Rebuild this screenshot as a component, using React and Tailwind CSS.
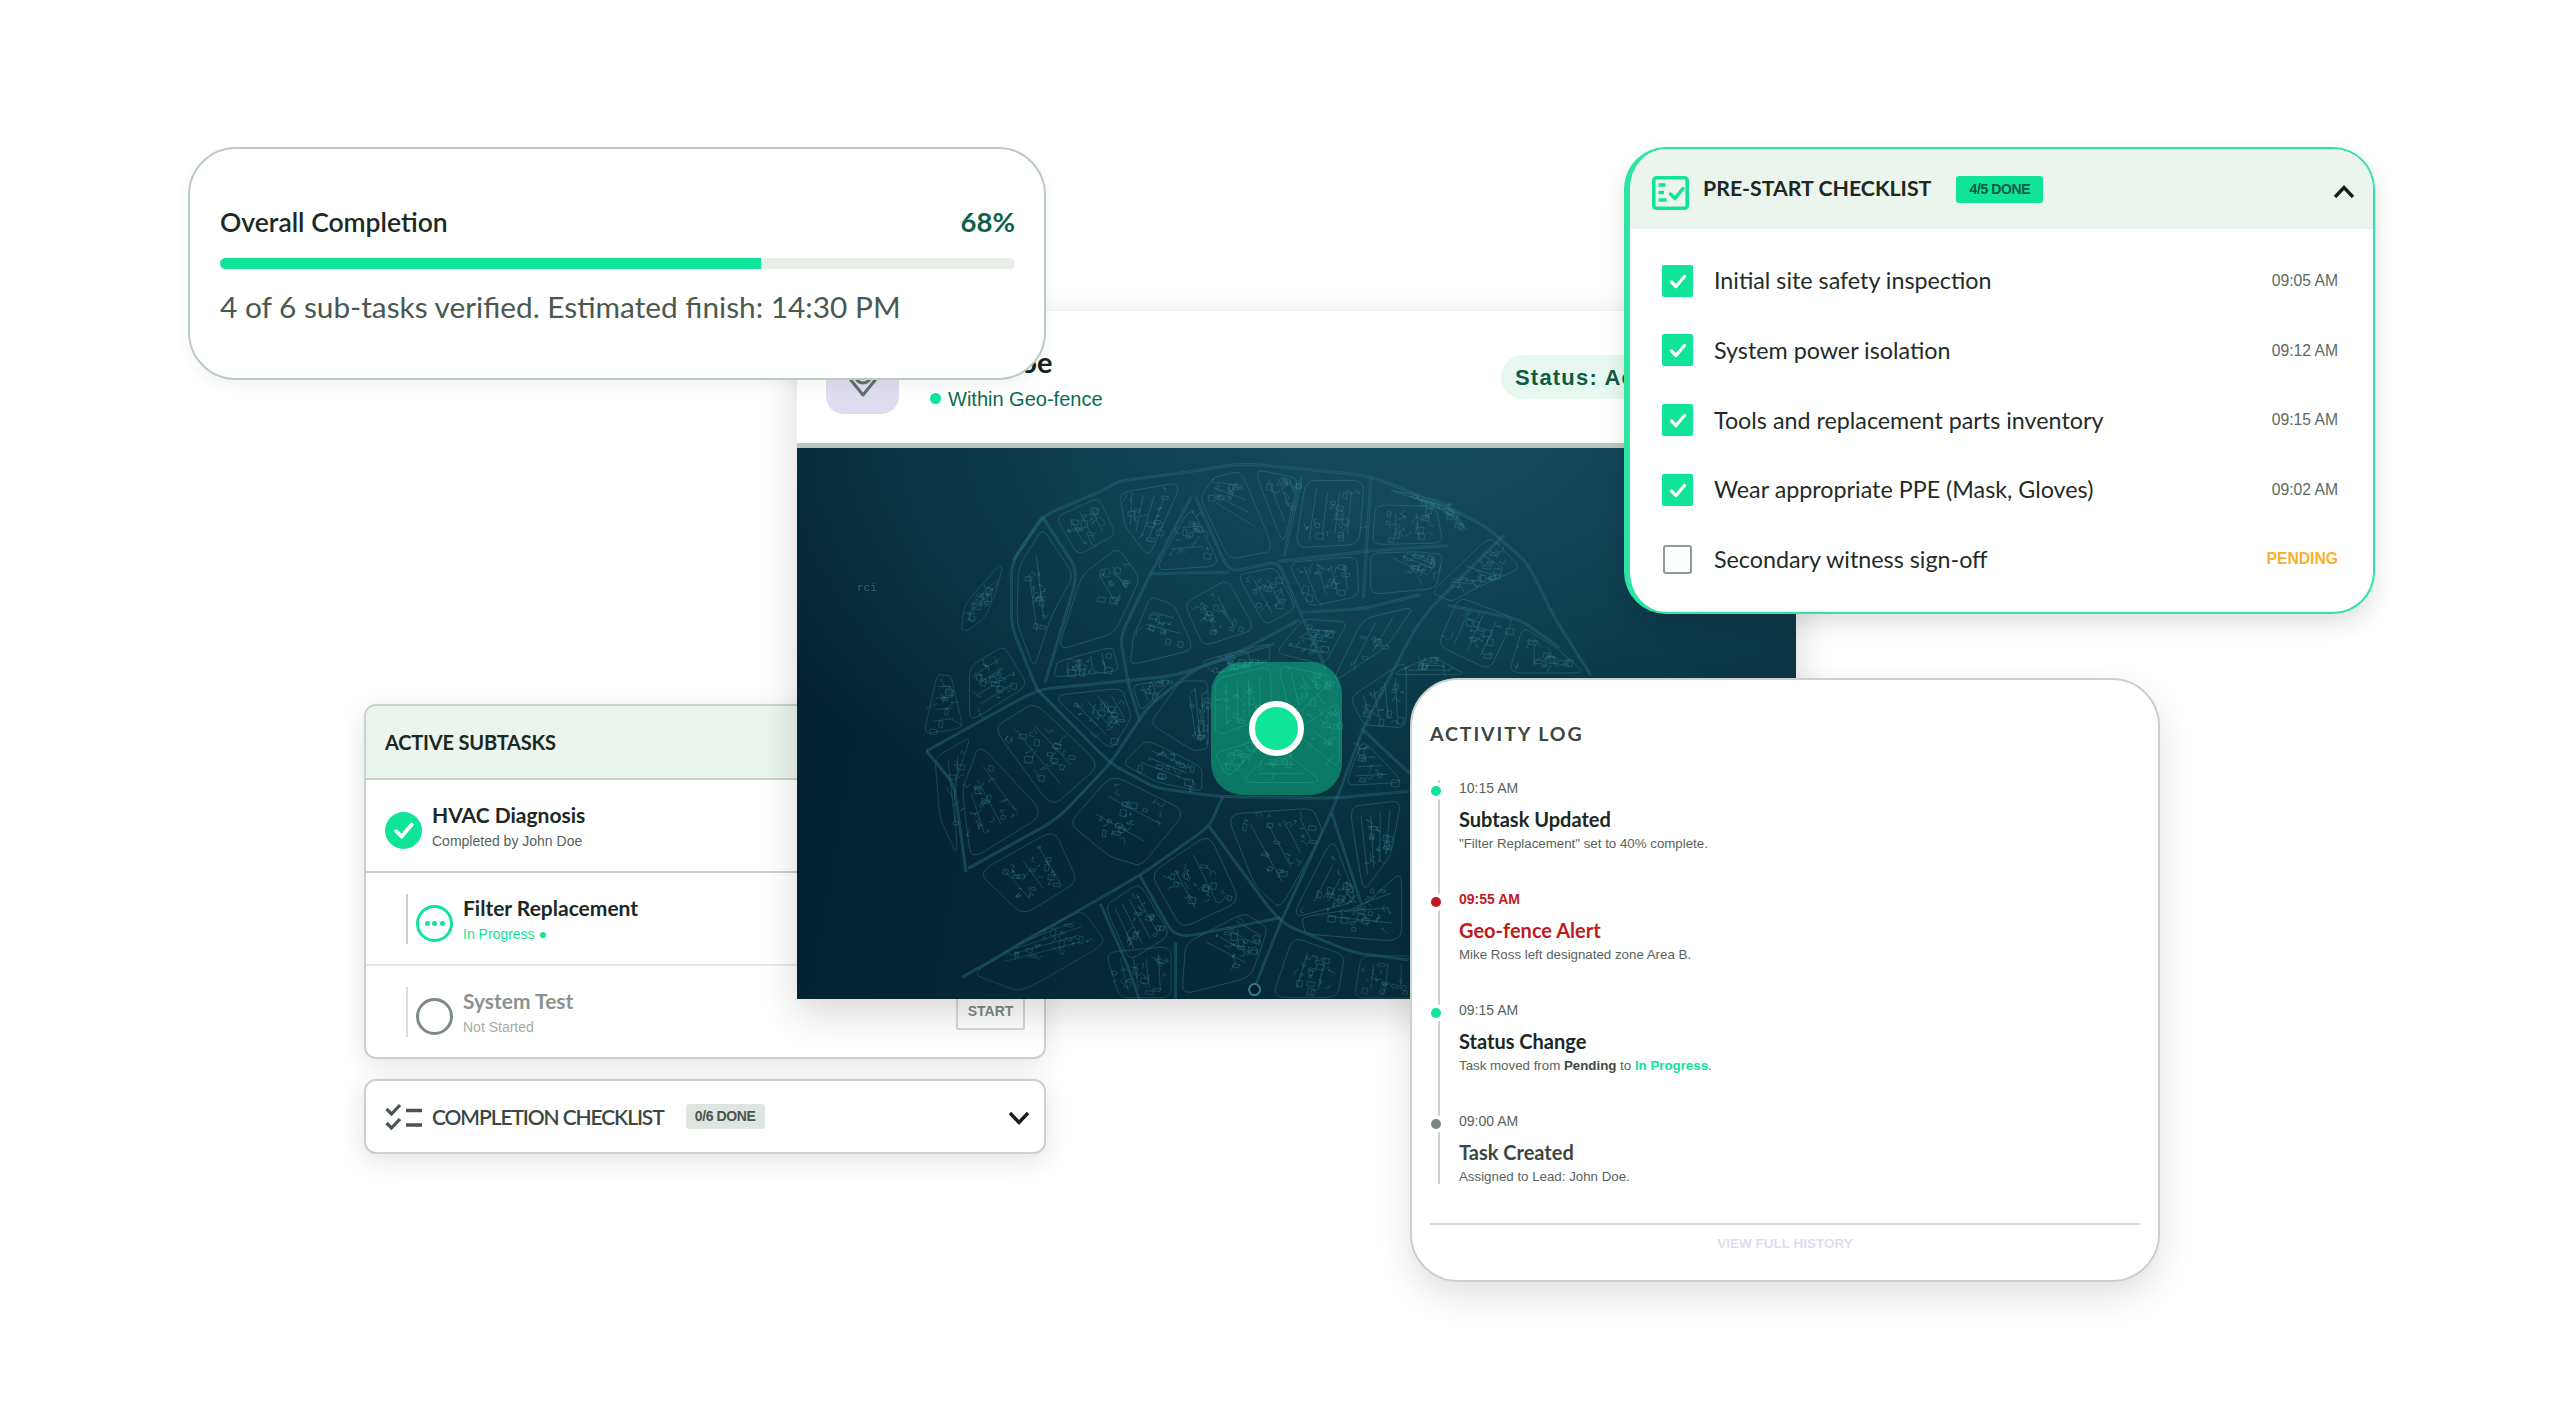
import React from "react";

const SX = 2.53, SY = 2.85;
const P = ([x, y]) => [3 + x / SX, 3 + y / SY];
const f = (n) => n.toFixed(1);
const pathOf = (pts, close) => "M" + pts.map((p) => f(p[0]) + " " + f(p[1])).join("L") + (close ? "Z" : "");
const lerp = (a, b, t) => [a[0] + (b[0] - a[0]) * t, a[1] + (b[1] - a[1]) * t];
const roundPoly = (pts, r = 0.18) => {
  const n = pts.length;
  let d = "";
  for (let i = 0; i < n; i++) {
    const p = pts[i], prev = pts[(i + n - 1) % n], next = pts[(i + 1) % n];
    const a = lerp(p, prev, r), b = lerp(p, next, r);
    d += (i === 0 ? "M" : "L") + f(a[0]) + " " + f(a[1]) + "Q" + f(p[0]) + " " + f(p[1]) + " " + f(b[0]) + " " + f(b[1]);
  }
  return d + "Z";
};
const smoothLine = (pts) => {
  let d = "M" + f(pts[0][0]) + " " + f(pts[0][1]);
  for (let i = 1; i < pts.length - 1; i++) {
    const a = lerp(pts[i], pts[i - 1], 0.2), b = lerp(pts[i], pts[i + 1], 0.2);
    d += "L" + f(a[0]) + " " + f(a[1]) + "Q" + f(pts[i][0]) + " " + f(pts[i][1]) + " " + f(b[0]) + " " + f(b[1]);
  }
  const l = pts[pts.length - 1];
  return d + "L" + f(l[0]) + " " + f(l[1]);
};

const BLOCKS = [
  [[400,520],[410,440],[510,310],[520,320],[500,400],[470,480],[420,525]],
  [[545,320],[615,190],[705,345],[640,480],[590,650],[540,500]],
  [[635,185],[760,120],[810,240],[700,310]],
  [[705,345],[810,255],[875,355],[800,535],[635,590]],
  [[800,110],[980,75],[885,320],[815,220]],
  [[885,350],[990,140],[1075,335]],
  [[1000,130],[1040,60],[1120,40],[1215,300],[1085,330]],
  [[1140,40],[1270,70],[1225,290]],
  [[1270,70],[1440,70],[1425,280],[1240,290]],
  [[1445,145],[1620,150],[1640,270],[1435,275]],
  [[1461,100],[1660,170],[1700,240],[1630,140]],
  [[835,530],[885,400],[955,430],[1010,575],[825,625]],
  [[960,430],[1085,350],[1165,515],[1015,570]],
  [[1095,345],[1205,320],[1265,455],[1175,510]],
  [[1220,310],[1420,290],[1425,420],[1280,455]],
  [[1430,285],[1568,280],[1640,290],[1620,400],[1430,420]],
  [[640,600],[800,550],[820,630],[630,650]],
  [[620,690],[820,665],[850,760],[790,870]],
  [[835,665],[950,645],[860,750]],
  [[960,640],[1040,640],[1040,860],[1000,870],[870,780]],
  [[1190,580],[1270,470],[1400,480],[1330,620]],
  [[1000,600],[1200,540],[1200,600],[1040,640]],
  [[1420,470],[1568,430],[1490,560],[1330,680]],
  [[1040,640],[1200,600],[1205,760],[1040,830]],
  [[1200,600],[1370,640],[1240,780]],
  [[1240,800],[1370,700],[1370,920]],
  [[1100,950],[1205,830],[1340,950]],
  [[1040,860],[1190,810],[1080,940]],
  [[305,820],[345,625],[385,630],[420,800]],
  [[420,790],[420,610],[520,540],[590,670]],
  [[470,780],[590,695],[780,900],[640,1040]],
  [[400,960],[450,810],[640,1040],[425,1190]],
  [[660,1060],[785,900],[1000,1020],[870,1200],[780,1170]],
  [[800,890],[870,810],[1030,900],[1030,980],[900,950]],
  [[335,860],[440,790],[390,950],[400,1180],[350,1060]],
  [[430,1200],[650,1060],[720,1230],[560,1340]],
  [[410,1500],[570,1380],[730,1290],[800,1400],[550,1560]],
  [[760,1290],[860,1215],[950,1385],[830,1470]],
  [[870,1200],[1040,1070],[1130,1290],[960,1380]],
  [[1060,1020],[1310,1000],[1340,1080],[1215,1330],[1140,1250]],
  [[1350,1080],[1420,1290],[1230,1345]],
  [[1380,1000],[1530,980],[1500,1160],[1420,1280]],
  [[1370,960],[1420,810],[1540,950]],
  [[960,1400],[1130,1300],[1200,1350],[1150,1510],[950,1568]],
  [[760,1420],[950,1400],[950,1568],[800,1568]],
  [[1240,1370],[1390,1430],[1370,1568],[1180,1568]],
  [[1250,1330],[1420,1300],[1540,1180],[1540,1410],[1260,1385]],
  [[1410,1430],[1568,1430],[1568,1568],[1390,1568]],
  [[1581,410],[1751,225],[1841,330],[1720,390],[1640,440]],
  [[1661,400],[1821,470],[1751,640],[1600,560]],
  [[1821,490],[1921,560],[2001,640],[1780,640]],
  [[1380,700],[1543,577],[1543,800],[1420,790]],
  [[1480,640],[1600,580],[1700,640]],
];

const ROADS = [
  [[320,855],[600,680],[780,660],[950,640],[1100,580],[1265,480]],
  [[600,680],[785,890],[900,960],[1060,985],[1340,990],[1540,970]],
  [[1150,1530],[1215,1345],[1345,1030],[1425,790],[1568,480],[1780,240]],
  [[410,1500],[860,1210],[1035,1070],[1070,985]],
  [[425,1190],[650,1050],[785,890],[880,730],[1000,620],[1200,550]],
  [[600,680],[535,500],[535,320],[615,185]],
  [[880,365],[990,130]],
  [[880,365],[810,530],[830,660],[860,770]],
  [[615,190],[705,345],[620,660]],
  [[1000,130],[1085,345],[1210,315],[1265,460],[1330,620]],
  [[885,350],[1085,345]],
  [[1210,315],[1440,285],[1640,270]],
  [[1035,1070],[1215,1345],[1400,1430],[1540,1450]],
  [[1345,1030],[1420,1290]],
  [[860,1210],[950,1390],[1215,1330]],
  [[1270,70],[1225,300]],
  [[1445,70],[1425,420]],
  [[540,310],[615,185],[760,115],[810,85],[980,60],[1120,35],[1440,70],[1660,170],[1741,220],[1841,320],[1911,480],[2001,640]],
  [[1265,460],[1420,450],[1568,410]],
  [[1640,440],[1821,480],[1921,560]],
  [[760,1290],[830,1470],[860,1568]],
  [[420,1200],[390,950],[320,855]],
  [[950,1400],[950,1568]],
  [[1420,790],[1543,920]],
];

let seed = 20240;
const rnd = () => ((seed = (seed * 16807) % 2147483647) / 2147483647);

const DRAWN = BLOCKS.map((raw) => {
  const pts = raw.map(P);
  const c = pts.reduce((s, p) => [s[0] + p[0] / pts.length, s[1] + p[1] / pts.length], [0, 0]);
  const d = Math.hypot(c[0] - 470, (c[1] - 270) * 1.1);
  const alpha = Math.max(0.18, Math.min(0.46, 0.78 - d / 800));
  const inset = pts.map((p) => lerp(c, p, 0.87));
  const parts = [roundPoly(inset)];
  const n = inset.length;
  const k = Math.floor(n / 2);
  const e0a = inset[0], e0b = inset[1], e1a = inset[k % n], e1b = inset[(k + 1) % n];
  const count = 2 + Math.floor(rnd() * 3);
  for (let i = 1; i <= count; i++) {
    const t = i / (count + 1);
    const a = lerp(e0a, e0b, t), b = lerp(e1b, e1a, t);
    const s = 0.12 + rnd() * 0.1;
    parts.push(pathOf([lerp(a, b, s), lerp(a, b, 1 - s)]));
  }
  const span = Math.hypot(e0a[0] - e1a[0], e0a[1] - e1a[1]);
  const many = Math.min(26, Math.max(5, Math.floor(span / 3.5)));
  for (let i = 0; i < many; i++) {
    const u = lerp(lerp(e0a, e0b, rnd()), lerp(e1b, e1a, rnd()), 0.15 + rnd() * 0.7);
    if (i % 3 === 0) {
      const w = 3 + rnd() * 5, h = 3 + rnd() * 5;
      parts.push(pathOf([u, [u[0] + w, u[1] + 1], [u[0] + w - 1, u[1] + h], [u[0] - 1, u[1] + h - 1]], true));
    } else {
      const seg = [u];
      let cur = u;
      for (let j = 0; j < 3; j++) {
        cur = [cur[0] + (rnd() - 0.5) * 9, cur[1] + (rnd() - 0.5) * 9];
        seg.push(cur);
      }
      parts.push(smoothLine(seg));
    }
  }
  return { inner: parts.join(" "), alpha };
});
const ROADPATHS = ROADS.map((r) => smoothLine(r.map(P)));

function CityMap() {
  const rb = P([1150, 1535]);
  return (
    <svg className="absolute inset-0 w-full h-full" viewBox="0 0 999 551" fill="none">
      {DRAWN.map((b, i) => (
        <path key={i} d={b.inner} stroke="#3a8595" strokeWidth="0.9" opacity={b.alpha} />
      ))}
      {ROADPATHS.map((d, i) => (
        <g key={i}>
          <path d={d} stroke="#2f7b8b" strokeWidth="2.8" opacity="0.42" strokeLinejoin="round" />
          <path d={d} stroke="#0d3a48" strokeWidth="0.9" opacity="0.55" strokeLinejoin="round" />
        </g>
      ))}
      <circle cx={rb[0]} cy={rb[1]} r="5.5" fill="#05202c" stroke="#2f7b8b" strokeWidth="2" />
      <text x="60" y="143" fontSize="11" fill="#2c6575" fontFamily="Liberation Mono, monospace">rci</text>
    </svg>
  );
}

const Check = ({ size = 20 }) => (
  <svg width={size} height={size} viewBox="0 0 20 20" fill="none">
    <path d="M3.5 11 L8 15.5 L16.5 5.5" stroke="#fff" strokeWidth="3.2" strokeLinecap="round" strokeLinejoin="round" />
  </svg>
);

function OverallCard() {
  return (
    <div className="absolute left-[188px] top-[147px] z-20 w-[858px] h-[233px] rounded-[48px] border-2 border-[#bccbc2] bg-white pl-[30px] pr-[29px] pt-[55px] shadow-[0_6px_14px_rgba(30,60,45,0.06)] font-['Lato',sans-serif]">
      <div className="flex items-center justify-between h-[36px]">
        <span className="text-[26.5px] leading-[36px] font-semibold text-[#1c2a24]">Overall Completion</span>
        <span className="text-[27.5px] leading-[36px] font-bold text-[#0e6148]">68%</span>
      </div>
      <div className="mt-[18px] h-[11px] rounded-full bg-[#e8efe9] overflow-hidden">
        <div className="h-full w-[68%] bg-[#10e498]" />
      </div>
      <p className="mt-[20px] text-[29.8px] leading-[36px] text-[#4a5850]">4 of 6 sub-tasks verified. Estimated finish: 14:30 PM</p>
    </div>
  );
}

function CenterCard() {
  return (
    <div className="absolute left-[797px] top-[310px] z-10 w-[999px] h-[689px] flex flex-col bg-white shadow-[0_14px_36px_rgba(0,0,0,0.16)]">
      <div className="h-[138px] shrink-0 flex items-center justify-between pl-[29px] pr-[29px] border-t border-[#eef1ef] border-b-[5px] border-b-[#bcc5be]">
        <div className="flex items-center gap-[31px]">
          <div className="w-[73px] h-[73px] rounded-[18px] bg-[#e0dcf0] flex items-center justify-center">
            <svg width="38" height="44" viewBox="0 0 38 44" fill="none">
              <path d="M19 40 L6 24 A16 16 0 1 1 32 24 Z" stroke="#5f6f68" strokeWidth="3" strokeLinejoin="round" />
              <circle cx="19" cy="20" r="8" stroke="#5f6f68" strokeWidth="3" />
            </svg>
          </div>
          <div className="mt-[5px]">
            <div className="font-['Lato',sans-serif] font-bold text-[29px] leading-[34px] text-[#16211c]">John Doe</div>
            <div className="mt-[4px] flex items-center gap-[7px] font-['Liberation_Sans',sans-serif] text-[20px] leading-[32px] text-[#0c6b4f]">
              <span className="w-[11px] h-[11px] rounded-full bg-[#10e498]" />
              Within Geo-fence
            </div>
          </div>
        </div>
        <div className="w-[266px] h-[44px] rounded-full bg-[#e7f8f0] pl-[14px] flex items-center font-['Liberation_Sans',sans-serif] font-bold text-[22px] tracking-[1.2px] text-[#0f5c45]">
          Status: Active
        </div>
      </div>
      <div className="relative flex-1 overflow-hidden bg-[radial-gradient(ellipse_75%_85%_at_62%_-5%,#154e5f_0%,#0f3f50_45%,rgba(8,44,58,0)_100%),linear-gradient(100deg,#042231_0%,#072c3b_60%,#0a2d3c_100%)]">
        <CityMap />
        <div className="absolute left-[414px] top-[214px] w-[131px] h-[133px] rounded-[32px] bg-[#10e498]/40 flex items-center justify-center">
          <div className="w-[55px] h-[55px] rounded-full bg-[#10e498] border-[6px] border-white" />
        </div>
      </div>
    </div>
  );
}

function ChecklistIcon() {
  return (
    <svg className="mt-[7px]" width="37" height="34" viewBox="0 0 37 34" fill="none">
      <rect x="1.8" y="1.8" width="33.4" height="30.4" rx="2.5" stroke="#10e498" strokeWidth="3.6" />
      <path d="M6.5 9h7M6.5 16.5h5.5M6.5 24h8" stroke="#10e498" strokeWidth="3.4" />
      <path d="M18.5 18 L23 22.5 L31 12.5" stroke="#10e498" strokeWidth="3.4" strokeLinecap="round" strokeLinejoin="round" />
    </svg>
  );
}

const CHECKS = [
  ["Initial site safety inspection", "09:05 AM", true],
  ["System power isolation", "09:12 AM", true],
  ["Tools and replacement parts inventory", "09:15 AM", true],
  ["Wear appropriate PPE (Mask, Gloves)", "09:02 AM", true],
  ["Secondary witness sign-off", "PENDING", false],
];

function PreStart() {
  return (
    <div className="absolute left-[1624px] top-[147px] z-20 w-[751px] h-[467px] rounded-[42px] overflow-hidden border-2 border-l-[6px] border-[#2ee4a2] bg-white shadow-[0_10px_22px_rgba(0,0,0,0.12)] font-['Lato',sans-serif]">
      <div className="h-[80px] bg-[#ebf4ed] flex items-center pl-[22px] pr-[17px]">
        <ChecklistIcon />
        <span className="ml-[14px] text-[21.3px] font-bold text-[#1b2823]">PRE-START CHECKLIST</span>
        <span className="ml-[25px] h-[27px] w-[87px] rounded-[3px] bg-[#10e498] flex items-center justify-center font-['Liberation_Sans',sans-serif] font-bold text-[14px] tracking-[-0.4px] text-[#0d5c45]">4/5 DONE</span>
        <svg className="ml-auto mt-[6px]" width="24" height="16" viewBox="0 0 24 16" fill="none">
          <path d="M3 13 L12 3.5 L21 13" stroke="#16211c" strokeWidth="3.4" />
        </svg>
      </div>
      <div className="pt-[17px] pl-[32px] pr-[35px]">
        {CHECKS.map(([label, time, done]) => (
          <div key={label} className="h-[69.6px] flex items-center">
            {done ? (
              <div className="w-[31px] h-[32px] rounded-[2px] bg-[#10e498] flex items-center justify-center"><Check /></div>
            ) : (
              <div className="w-[29px] h-[29px] ml-[1px] mr-[1px] rounded-[3px] border-2 border-[#8e9a94] bg-white" />
            )}
            <span className="ml-[21px] text-[23.3px] text-[#1f2c27]">{label}</span>
            <span className={"ml-auto font-['Liberation_Sans',sans-serif] text-[15.7px] " + (done ? "text-[#5c6a62]" : "font-bold text-[#fbb02f]")}>{time}</span>
          </div>
        ))}
      </div>
    </div>
  );
}

function Subtasks() {
  return (
    <div className="absolute left-[364px] top-[704px] z-0 w-[682px] font-['Lato',sans-serif]">
      <div className="h-[355px] rounded-[12px] border-2 border-[#c6d2cb] bg-white overflow-hidden shadow-[0_6px_26px_rgba(0,0,0,0.10)]">
        <div className="h-[74px] bg-[#ebf4ed] border-b-2 border-[#c6d2cb] flex items-center pl-[19px]">
          <span className="text-[20px] font-bold text-[#1b2823] tracking-[-0.2px]">ACTIVE SUBTASKS</span>
        </div>
        <div className="h-[93px] border-b-2 border-[#c6d2cb] flex items-center pl-[19px]">
          <div className="w-[37px] h-[37px] mt-[9px] rounded-full bg-[#10e498] flex items-center justify-center"><Check size={24} /></div>
          <div className="ml-[10px] mt-[1px]">
            <div className="text-[21px] leading-[27px] font-bold text-[#1b2823]">HVAC Diagnosis</div>
            <div className="mt-[3px] font-['Liberation_Sans',sans-serif] text-[14px] leading-[20px] text-[#56635c]">Completed by John Doe</div>
          </div>
        </div>
        <div className="h-[93px] border-b-2 border-[#e2e8e4] flex items-center pl-[40px]">
          <div className="w-[2px] h-[50px] bg-[#c6d2cb] mr-[8px]" />
          <div className="w-[37px] h-[37px] mt-[9px] rounded-full border-[3.5px] border-[#10e498] flex items-center justify-center gap-[2.5px]">
            <span className="w-[5px] h-[5px] rounded-full bg-[#10e498]" />
            <span className="w-[5px] h-[5px] rounded-full bg-[#10e498]" />
            <span className="w-[5px] h-[5px] rounded-full bg-[#10e498]" />
          </div>
          <div className="ml-[10px] mt-[1px]">
            <div className="text-[21px] leading-[27px] font-bold text-[#1b2823]">Filter Replacement</div>
            <div className="mt-[3px] font-['Liberation_Sans',sans-serif] text-[14px] leading-[20px] text-[#10e498]">In Progress ●</div>
          </div>
        </div>
        <div className="h-[91px] flex items-center pl-[40px] pr-[19px]">
          <div className="w-[2px] h-[50px] bg-[#d7dfda] mr-[8px]" />
          <div className="w-[37px] h-[37px] mt-[9px] rounded-full border-[3.5px] border-[#7f8a84]" />
          <div className="ml-[10px] mt-[1px]">
            <div className="text-[21px] leading-[27px] font-bold text-[#8a938e]">System Test</div>
            <div className="mt-[3px] font-['Liberation_Sans',sans-serif] text-[14px] leading-[20px] text-[#a5aca8]">Not Started</div>
          </div>
          <div className="ml-auto w-[69px] h-[36px] rounded-[2px] border-2 border-[#d4dbd7] flex items-center justify-center font-['Liberation_Sans',sans-serif] font-bold text-[14px] text-[#7d8a83]">START</div>
        </div>
      </div>
      <div className="mt-[20px] h-[75px] rounded-[12px] border-2 border-[#c6d2cb] bg-white flex items-center pl-[19px] pr-[13px] shadow-[0_6px_26px_rgba(0,0,0,0.12)]">
        <svg width="37" height="28" viewBox="0 0 37 28" fill="none">
          <path d="M1.5 6 L6.5 11 L15 2M1.5 20 L6.5 25 L15 16" stroke="#48564f" strokeWidth="3.2" />
          <path d="M21 7.5h16M21 22h16" stroke="#48564f" strokeWidth="3.6" />
        </svg>
        <span className="ml-[10px] text-[21px] tracking-[-1.1px] font-semibold text-[#3a4841]">COMPLETION CHECKLIST</span>
        <span className="ml-[22px] w-[79px] h-[25px] rounded-[3px] bg-[#dfe5e1] flex items-center justify-center font-['Liberation_Sans',sans-serif] font-bold text-[14px] tracking-[-0.4px] text-[#48564f]">0/6 DONE</span>
        <svg className="ml-auto mt-[2px]" width="24" height="16" viewBox="0 0 24 16" fill="none">
          <path d="M3 3 L12 12.5 L21 3" stroke="#16211c" strokeWidth="3.4" />
        </svg>
      </div>
    </div>
  );
}

const LOG = [
  { time: "10:15 AM", title: "Subtask Updated", dot: "bg-[#10e498]", titleCls: "text-[#1b2823]", timeCls: "text-[#56635c]", desc: <>"Filter Replacement" set to 40% complete.</> },
  { time: "09:55 AM", title: "Geo-fence Alert", dot: "bg-[#c01a1f]", titleCls: "text-[#c01a1f]", timeCls: "text-[#c01a1f] font-bold", desc: <>Mike Ross left designated zone Area B.</> },
  { time: "09:15 AM", title: "Status Change", dot: "bg-[#10e498]", titleCls: "text-[#1b2823]", timeCls: "text-[#56635c]", desc: <>Task moved from <b className="text-[#3a4841]">Pending</b> to <b className="text-[#10e498]">In Progress</b>.</> },
  { time: "09:00 AM", title: "Task Created", dot: "bg-[#7b8580]", titleCls: "text-[#3a4841]", timeCls: "text-[#56635c]", desc: <>Assigned to Lead: John Doe.</> },
];

function Activity() {
  return (
    <div className="absolute left-[1410px] top-[678px] z-30 w-[750px] h-[604px] rounded-[48px] border-2 border-[#c6d2cb] bg-white px-[18px] pt-[42px] shadow-[0_14px_34px_rgba(0,0,0,0.12)] font-['Lato',sans-serif]">
      <div className="text-[19.5px] leading-[24px] font-bold tracking-[1.9px] text-[#3a4841]">ACTIVITY LOG</div>
      <ul className="mt-[34px] ml-[8px]">
        {LOG.map((it, i) => (
          <li key={it.time} className={"relative border-l-2 border-[#c6d2cb] pl-[19px] " + (i < 3 ? "h-[111px]" : "h-[71px]")}>
            <span className={"absolute -left-[9px] top-[6px] w-[10px] h-[10px] rounded-full ring-4 ring-white " + it.dot} />
            <div className={"font-['Liberation_Sans',sans-serif] text-[14px] leading-[16px] " + it.timeCls}>{it.time}</div>
            <div className={"mt-[10px] text-[20px] leading-[26px] font-bold " + it.titleCls}>{it.title}</div>
            <div className="mt-[3px] font-['Liberation_Sans',sans-serif] text-[13.3px] leading-[18px] text-[#56635c]">{it.desc}</div>
          </li>
        ))}
      </ul>
      <div className="mt-[39px] border-t-2 border-[#d5dcd8] pt-[11px] text-center font-['Liberation_Sans',sans-serif] font-bold text-[13.5px] leading-[16px] text-[#e0dcf0]">VIEW FULL HISTORY</div>
    </div>
  );
}

export default function App() {
  return (
    <div className="relative w-[2560px] h-[1428px] bg-white overflow-hidden">
      <Subtasks />
      <CenterCard />
      <OverallCard />
      <PreStart />
      <Activity />
    </div>
  );
}
